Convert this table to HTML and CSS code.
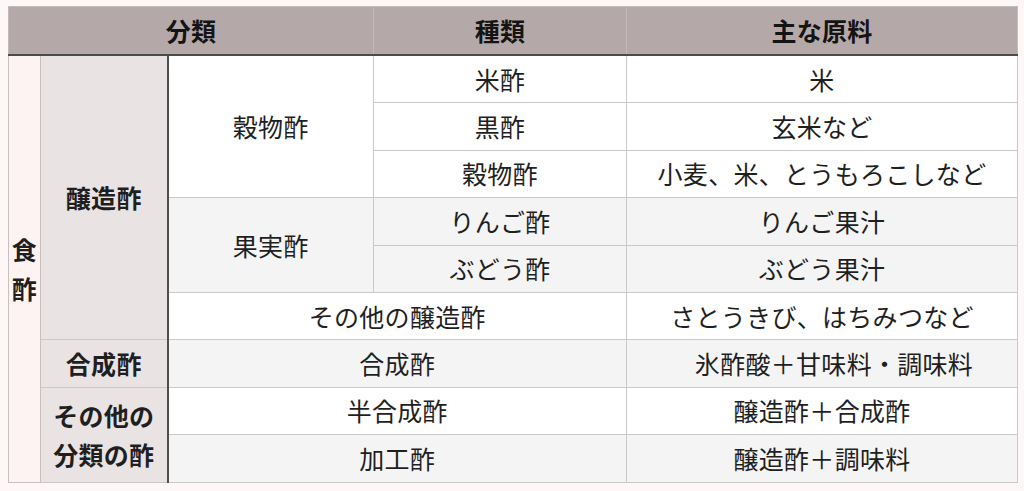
FILE: index.html
```html
<!DOCTYPE html>
<html lang="ja">
<head>
<meta charset="utf-8">
<title>食酢の分類</title>
<link rel="stylesheet" href="styles.css">
</head>
<body>
<table class="tbl">
  <colgroup>
    <col class="w1"><col class="w2"><col class="w3"><col class="w4"><col class="w5">
  </colgroup>
  <thead>
    <tr>
      <th colspan="3">分類</th>
      <th>種類</th>
      <th>主な原料</th>
    </tr>
  </thead>
  <tbody>
    <tr>
      <td class="cat1" rowspan="9">食<br>酢</td>
      <td class="cat2" rowspan="6">醸造酢</td>
      <td rowspan="3">穀物酢</td>
      <td>米酢</td>
      <td>米</td>
    </tr>
    <tr>
      <td>黒酢</td>
      <td>玄米など</td>
    </tr>
    <tr>
      <td>穀物酢</td>
      <td>小麦、米、とうもろこしなど</td>
    </tr>
    <tr class="alt">
      <td rowspan="2">果実酢</td>
      <td>りんご酢</td>
      <td>りんご果汁</td>
    </tr>
    <tr class="alt">
      <td>ぶどう酢</td>
      <td>ぶどう果汁</td>
    </tr>
    <tr>
      <td colspan="2">その他の醸造酢</td>
      <td>さとうきび、はちみつなど</td>
    </tr>
    <tr class="alt">
      <td class="cat2">合成酢</td>
      <td colspan="2">合成酢</td>
      <td class="shift">氷酢酸＋甘味料・調味料</td>
    </tr>
    <tr>
      <td class="cat2" rowspan="2">その他の<br>分類の酢</td>
      <td colspan="2">半合成酢</td>
      <td>醸造酢＋合成酢</td>
    </tr>
    <tr class="alt">
      <td colspan="2">加工酢</td>
      <td>醸造酢＋調味料</td>
    </tr>
  </tbody>
</table>
</body>
</html>
```

FILE: styles.css
```css
html, body {
  margin: 0;
  padding: 0;
  background: #fdf8f7;
}
body {
  padding: 6px 7px 9px 8px;
  font-family: "Noto Sans CJK JP", "Noto Sans", sans-serif;
  color: #1f1f1f;
}
.tbl {
  width: 1009px;
  table-layout: fixed;
  border-collapse: collapse;
  font-size: 25px;
  letter-spacing: 0.3px;
  line-height: 1.56;
  border: 1px solid #bdbdbd;
}
.w1 { width: 32px; }
.w2 { width: 127px; }
.w3 { width: 206px; }
.w4 { width: 253px; }
.w5 { width: 391px; }
.tbl th {
  height: 47px;
  padding: 0;
  background: #b4a9a8;
  font-weight: 700;
  color: #141414;
  border-left: 1px solid #c3b9b8;
  border-bottom: 2px solid #4b4b4b;
  text-align: center;
}
.tbl td {
  height: 46.4px;
  padding: 0;
  text-align: center;
  vertical-align: middle;
  background: #ffffff;
  border: 1px solid #c9c9c9;
}
.tbl .alt td {
  background: #f4f4f4;
}
.tbl td.cat1 {
  background: #fdf3f2;
  font-weight: 700;
  border-color: #c8bfbf;
}
.tbl td.cat2 {
  background: #e9e3e3;
  font-weight: 700;
  border-left-color: #c8bfbf;
  border-right: 2px solid #4f4f4f;
}
.tbl td.shift {
  padding-left: 24px;
}
```
